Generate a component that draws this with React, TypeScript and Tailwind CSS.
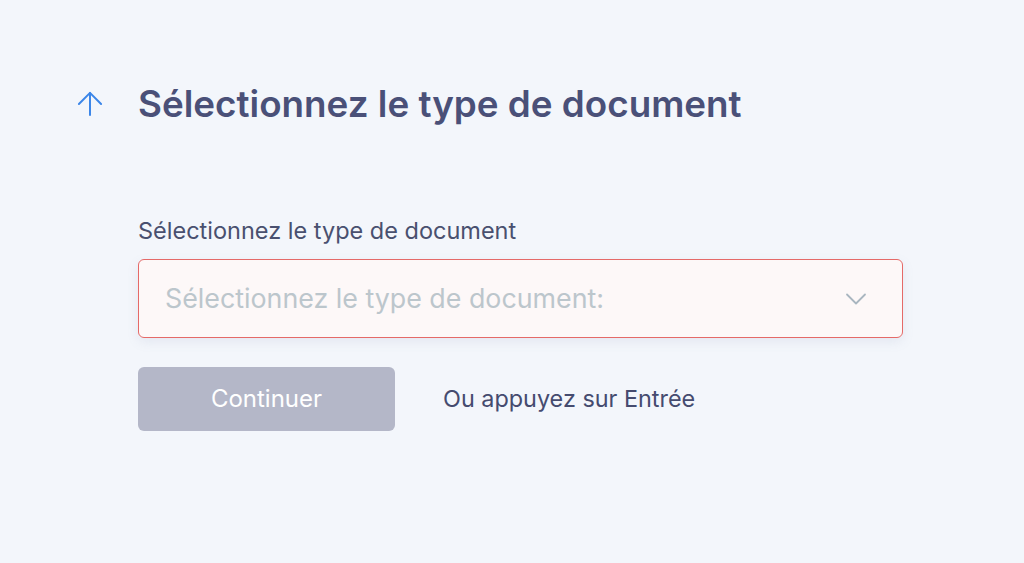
import { ArrowUp, ChevronDown } from 'lucide-react';

const App = () => {
    return (
        <div className="min-h-[563px] w-full bg-[#f3f6fb] font-['Inter',sans-serif]">
            <div className="pt-[80px] pl-[71px]">
                {/* Question header */}
                <div className="flex items-center h-[48px]">
                    <div className="w-[67px] flex items-center">
                        <ArrowUp size={38} strokeWidth={1.25} className="text-[#3b86e8]" />
                    </div>
                    <h1 className="text-[36.8px] font-semibold text-[#4a5078]">
                        Sélectionnez le type de document
                    </h1>
                </div>

                {/* Field */}
                <div className="pl-[67px] pt-[88px] w-[832px]">
                    <label className="block text-[23.5px] text-[#49506f] leading-[30px]">
                        Sélectionnez le type de document
                    </label>
                    <div className="mt-[13px] h-[79px] flex items-center justify-between rounded-md border-[1.5px] border-[#e56a68] bg-[#fdf8f8] pl-[26px] pr-[28px] shadow-[0_4px_12px_rgba(120,130,170,0.12)]">
                        <span className="text-[26.8px] text-[#bcc6cc]">
                            Sélectionnez le type de document:
                        </span>
                        <ChevronDown size={36} strokeWidth={1.2} className="text-[#a9b6c0]" />
                    </div>

                    <div className="mt-[29px] flex items-center gap-[48px]">
                        <button className="w-[257px] h-[64px] rounded-md bg-[#b4b7c8] text-[24px] text-white">
                            Continuer
                        </button>
                        <span className="text-[23.4px] text-[#454b6f]">Ou appuyez sur Entrée</span>
                    </div>
                </div>
            </div>
        </div>
    );
};

export default App;
